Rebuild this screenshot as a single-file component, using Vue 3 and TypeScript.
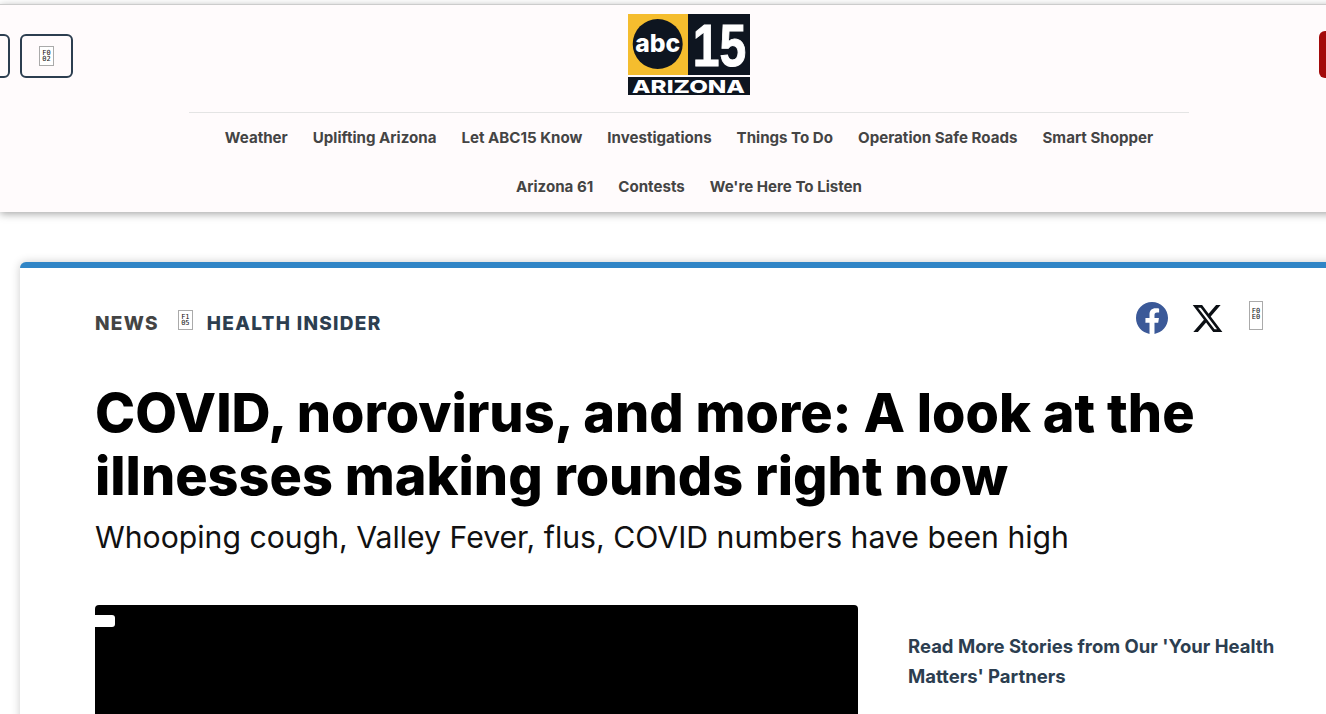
<template>
  <div class="page">
    <header class="site-header">
      <div class="top-row">
        <div class="left-btns">
          <button class="icon-btn"></button>
          <button class="icon-btn"><span class="tofu">F0<br />02</span></button>
        </div>
        <svg class="logo" viewBox="0 0 122 81" width="122" height="81">
          <rect x="0" y="0" width="60" height="61" fill="#f5bd2e" />
          <rect x="60" y="0" width="62" height="61" fill="#0e1520" />
          <rect x="0" y="63" width="122" height="18" fill="#0e1520" />
          <circle cx="29.7" cy="30" r="25" fill="#0e1520" />
          <text x="29.7" y="38" text-anchor="middle" class="logo-abc" textLength="45" lengthAdjust="spacingAndGlyphs">abc</text>
          <text transform="translate(91.5 52) scale(0.8 1)" text-anchor="middle" class="logo-num">15</text>
          <text x="60.5" y="78.5" text-anchor="middle" class="logo-az" textLength="113" lengthAdjust="spacingAndGlyphs">ARIZONA</text>
        </svg>
        <div class="right-btns">
          <button class="live-btn"></button>
        </div>
      </div>
      <nav class="main-nav">
        <a v-for="item in navItems" :key="item" href="#">{{ item }}</a>
      </nav>
    </header>

    <main class="card">
      <div class="crumb-row">
        <div class="crumbs">
          <span class="crumb-news">NEWS</span>
          <span class="tofu tofu-crumb">F1<br />05</span>
          <span class="crumb-section">HEALTH INSIDER</span>
        </div>
        <div class="share">
          <svg class="fb" viewBox="0 0 24 24" width="32" height="32">
            <path fill="#3b5998" d="M24 12.073c0-6.627-5.373-12-12-12s-12 5.373-12 12c0 5.99 4.388 10.954 10.125 11.854v-8.385H7.078v-3.47h3.047V9.43c0-3.007 1.792-4.669 4.533-4.669 1.312 0 2.686.235 2.686.235v2.953H15.83c-1.491 0-1.956.925-1.956 1.874v2.25h3.328l-.532 3.47h-2.796v8.385C19.612 23.027 24 18.062 24 12.073z" />
          </svg>
          <svg class="x" viewBox="0 0 24 24" width="33" height="33">
            <path fill="#0b0f14" d="M18.244 2.25h3.308l-7.227 8.26 8.502 11.24H16.17l-5.214-6.817L4.99 21.75H1.68l7.73-8.835L1.254 2.25H8.08l4.713 6.231zm-1.161 17.52h1.833L7.084 4.126H5.117z" />
          </svg>
          <span class="tofu tofu-share">F0<br />E0</span>
        </div>
      </div>

      <h1 class="headline">COVID, norovirus, and more: A look at the illnesses making rounds right now</h1>
      <p class="subhead">Whooping cough, Valley Fever, flus, COVID numbers have been high</p>

      <div class="story">
        <div class="video"><span class="video-tab"></span></div>
        <aside class="side">
          <a href="#">Read More Stories from Our 'Your Health Matters' Partners</a>
        </aside>
      </div>
    </main>
  </div>
</template>

<script setup lang="ts">
const navItems: string[] = [
  'Weather',
  'Uplifting Arizona',
  'Let ABC15 Know',
  'Investigations',
  'Things To Do',
  'Operation Safe Roads',
  'Smart Shopper',
  'Arizona 61',
  'Contests',
  "We're Here To Listen",
];
</script>

<style>
html,
body {
  margin: 0;
  background: #fff;
  overflow: hidden;
}
</style>

<style scoped>
.page {
  width: 1378px;
  height: 714px;
  padding-top: 4px;
  box-sizing: border-box;
  overflow: hidden;
  font-family: Inter, "Liberation Sans", sans-serif;
}

.site-header {
  height: 208px;
  box-sizing: border-box;
  border-top: 1px solid #ccc;
  background: #fffbfc;
  box-shadow: 0 2px 8px rgba(0, 0, 0, 0.35);
}

.top-row {
  display: grid;
  grid-template-columns: 1fr auto 1fr;
  align-items: center;
  height: 107px;
  padding-bottom: 17px;
  padding-top: 9px;
  box-sizing: border-box;
}

.left-btns {
  display: flex;
  gap: 10px;
  margin-left: -43px;
  margin-top: 2px;
}

.icon-btn {
  display: flex;
  align-items: center;
  justify-content: center;
  width: 53px;
  height: 44px;
  padding: 0;
  background: transparent;
  border: 2px solid #2c3e50;
  border-radius: 6px;
}

.tofu {
  display: inline-block;
  width: 13px;
  height: 15px;
  padding-top: 3px;
  border: 1px solid #aaa;
  box-sizing: content-box;
  font-family: "DejaVu Sans Mono", monospace;
  font-size: 7px;
  font-weight: 400;
  line-height: 6px;
  letter-spacing: 0;
  text-align: center;
  color: #111;
  background: #fff;
}

.logo {
  display: block;
  overflow: visible;
}

.logo-abc {
  font-family: Inter, sans-serif;
  font-size: 25px;
  font-weight: 800;
  fill: #fff;
}

.logo-num {
  font-family: "Liberation Sans", sans-serif;
  font-size: 60px;
  font-weight: 700;
  fill: #fff;
  stroke: #fff;
  stroke-width: 1px;
}

.logo-az {
  font-family: Inter, sans-serif;
  font-size: 18px;
  font-weight: 800;
  fill: #fff;
}

.right-btns {
  display: flex;
  justify-content: flex-end;
}

.live-btn {
  width: 59px;
  height: 47px;
  padding: 0;
  border: none;
  border-radius: 6px 0 0 6px;
  background: #a30a0a;
}

.main-nav {
  display: flex;
  flex-wrap: wrap;
  justify-content: center;
  width: 1000px;
  margin: 0 auto;
  border-top: 1px solid #e4e4e4;
}

.main-nav a {
  padding: 0 12.5px;
  line-height: 49px;
  font-size: 15.1px;
  font-weight: 700;
  color: #444;
  text-decoration: none;
}

.card {
  margin: 50px 20px 0;
  padding: 33px 75px 0;
  border-top: 6px solid #3085c6;
  border-radius: 6px 6px 0 0;
  background: #fff;
  box-shadow: 0 0 10px rgba(0, 0, 0, 0.2);
  height: 460px;
}

.crumb-row {
  display: flex;
  justify-content: space-between;
  align-items: center;
  height: 40px;
  padding-right: 20px;
}

.crumbs {
  display: flex;
  align-items: center;
  margin-top: 4px;
  font-size: 19px;
  font-weight: 800;
  letter-spacing: 1.3px;
}

.crumb-news {
  color: #444;
}

.crumb-section {
  color: #2c3e50;
}

.tofu-crumb {
  margin: 0 14px 6px 19px;
}

.share {
  display: flex;
  align-items: center;
  gap: 23px;
  margin-bottom: 6px;
}

.tofu-share {
  margin-left: 2px;
  margin-bottom: 5px;
  width: 12px;
  height: 21px;
  padding-top: 6px;
}

.headline {
  margin: 40px 0 0;
  font-size: 54px;
  line-height: 63px;
  font-weight: 800;
  color: #000;
}

.subhead {
  margin: 10px 0 0;
  font-size: 30.2px;
  line-height: 40px;
  font-weight: 400;
  color: #111;
}

.story {
  display: grid;
  grid-template-columns: 763px 375px;
  gap: 50px;
  margin-top: 48px;
}

.video {
  height: 300px;
  background: #000;
  border-radius: 4px;
  padding-top: 10px;
  box-sizing: border-box;
}

.video-tab {
  display: block;
  width: 20px;
  height: 12px;
  background: #fff;
  border-radius: 0 3px 3px 0;
}

.side {
  padding-top: 26px;
}

.side a {
  font-size: 18.5px;
  line-height: 30px;
  font-weight: 700;
  color: #2c3e50;
  text-decoration: none;
}
</style>
